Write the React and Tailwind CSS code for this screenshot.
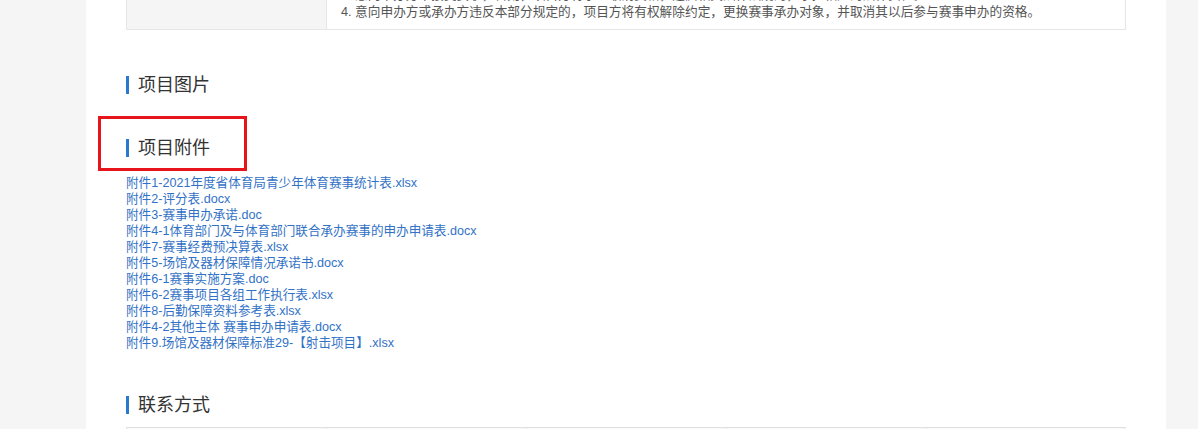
import React from 'react';

const attachments = [
  '附件1-2021年度省体育局青少年体育赛事统计表.xlsx',
  '附件2-评分表.docx',
  '附件3-赛事申办承诺.doc',
  '附件4-1体育部门及与体育部门联合承办赛事的申办申请表.docx',
  '附件7-赛事经费预决算表.xlsx',
  '附件5-场馆及器材保障情况承诺书.docx',
  '附件6-1赛事实施方案.doc',
  '附件6-2赛事项目各组工作执行表.xlsx',
  '附件8-后勤保障资料参考表.xlsx',
  '附件4-2其他主体 赛事申办申请表.docx',
  '附件9.场馆及器材保障标准29-【射击项目】.xlsx',
];

// Section title with blue bar on the left
function SectionTitle({ children }) {
  return (
    <h2 className="flex items-center h-[24px] text-[18px] leading-[24px] text-[#333] font-normal">
      <span className="w-[3px] h-[18px] bg-[#2b78cf] mr-[9px]"></span>
      {children}
    </h2>
  );
}

export default function App() {
  return (
    <div
      className="h-[429px] overflow-hidden bg-[#f5f5f5]"
      style={{ fontFamily: '"Liberation Sans", "Noto Sans CJK SC", sans-serif' }}
    >
      <div className="flow-root ml-[86px] w-[1080px] h-full bg-white px-[40px]">
        {/* tail of the rules table, scrolled partly out of view */}
        <div className="-mt-[21px] grid grid-cols-[200px_1fr] border border-t-0 border-[#e6e6e6]">
          <div className="bg-[#f5f5f5] border-r border-[#e6e6e6]"></div>
          <div className="min-w-0 overflow-hidden pl-[14px] pt-[8px] pb-[8px] text-[12.7px] leading-[17px] text-[#555]">
            <p className="whitespace-nowrap">3. 意向申办方不接受赛事，否则，项目方将予以取消资格，违反相关法律法规的，承担相应的法律责任。</p>
            <p className="whitespace-nowrap">4. 意向申办方或承办方违反本部分规定的，项目方将有权解除约定，更换赛事承办对象，并取消其以后参与赛事申办的资格。</p>
          </div>
        </div>

        <div className="mt-[43px]">
          <SectionTitle>项目图片</SectionTitle>
        </div>

        <div className="relative mt-[39px] w-fit">
          <SectionTitle>项目附件</SectionTitle>
          <div className="absolute -left-[28px] -top-[20px] w-[149px] h-[55px] border-[3px] border-[#e8141b]"></div>
        </div>

        <ul className="mt-[15px] text-[12.6px] leading-[16px]">
          {attachments.map((name) => (
            <li key={name}>
              <a href="#" className="text-[#3272c6] whitespace-nowrap">{name}</a>
            </li>
          ))}
        </ul>

        <div className="mt-[42px]">
          <SectionTitle>联系方式</SectionTitle>
        </div>

        <div className="mt-[10px] grid grid-cols-[200px_200px_200px_200px_198px] border-t border-l border-[#e0e0e0]">
          {['联系人', '联系电话', '联系邮箱', '联系地址', '备注'].map((h) => (
            <div key={h} className="h-[40px] border-r border-b border-[#e6e6e6] bg-[#f9f9f9]"></div>
          ))}
        </div>
      </div>
    </div>
  );
}
